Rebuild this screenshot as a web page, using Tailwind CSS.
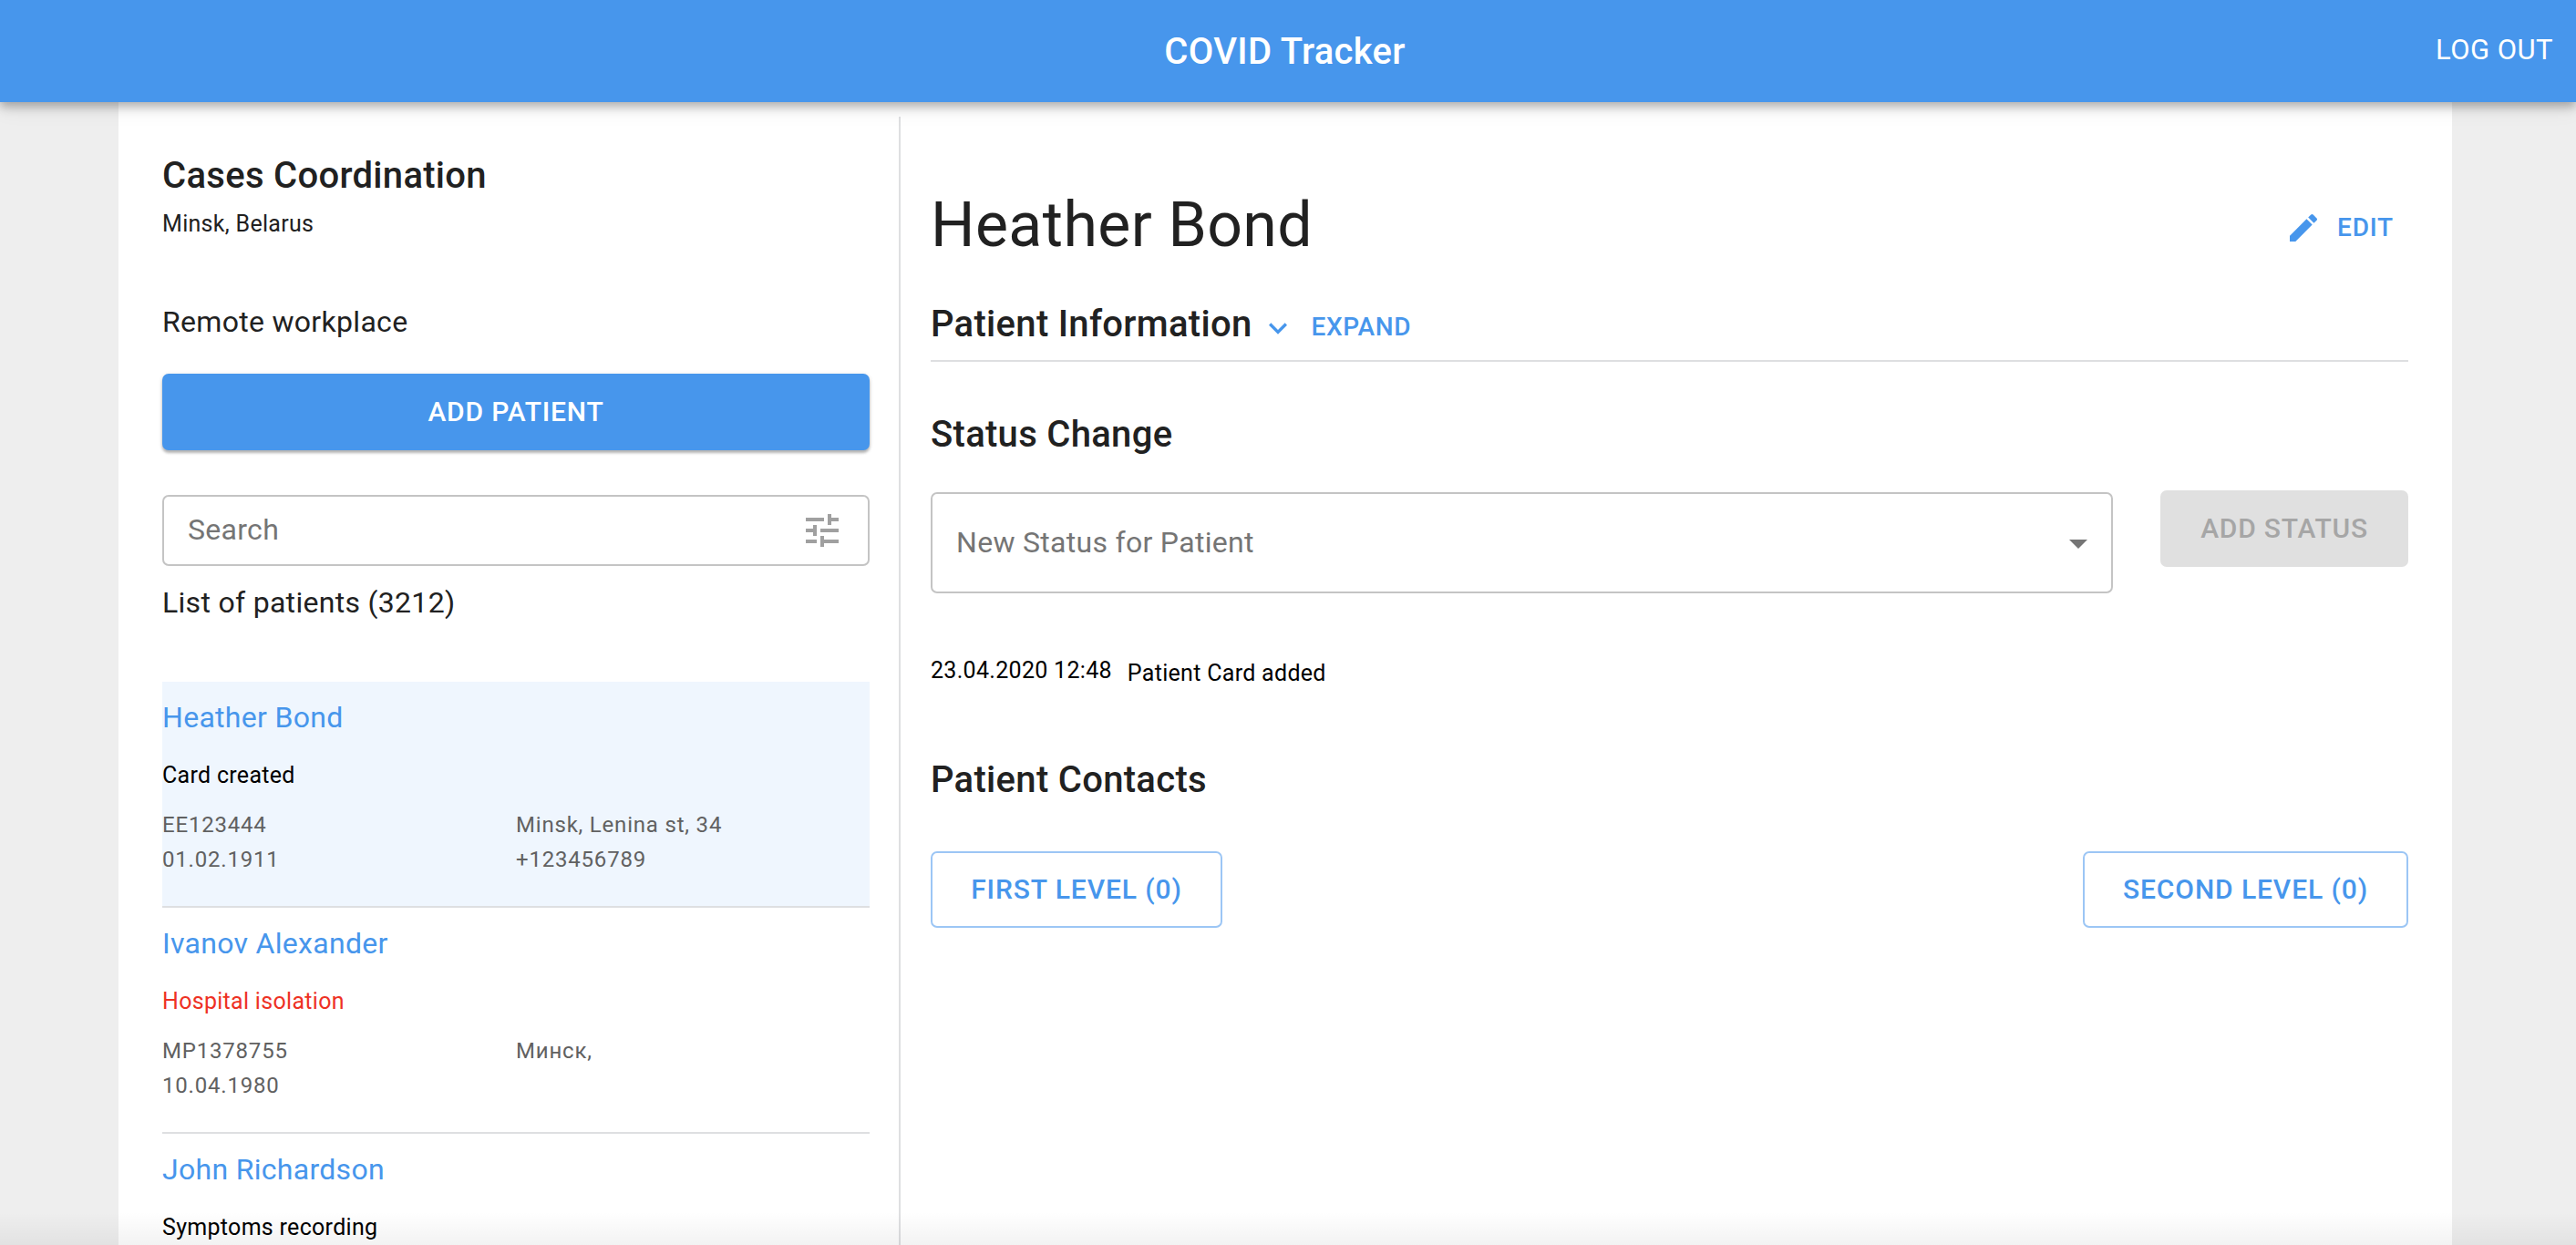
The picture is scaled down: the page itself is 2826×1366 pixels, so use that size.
<!DOCTYPE html>
<html lang="en">

<head>
    <meta charset="UTF-8">
    <meta name="viewport" content="width=device-width, initial-scale=1.0">
    <title>COVID Tracker</title>
    <script src="https://cdn.jsdelivr.net/npm/@tailwindcss/browser@4"></script>
</head>

<body class="relative h-screen overflow-hidden bg-[#eeeeee] font-['Roboto',sans-serif] text-[#212121]">
    <header class="relative z-10 flex h-[112px] items-center justify-center bg-[#4796ec] pr-[7px] pt-[2px] text-white shadow-[0_5px_10px_rgba(0,0,0,0.28),0_10px_20px_rgba(0,0,0,0.06)]">
        <h1 class="text-[40px] leading-[44px] font-medium tracking-[0.3px]">COVID Tracker</h1>
        <a class="absolute right-[25px] top-[37px] text-[31px] leading-[36px] tracking-[0.45px]">LOG OUT</a>
    </header>

    <main class="ml-[130px] flex h-[1254px] w-[2560px] bg-white">
        <!-- left column -->
        <aside class="w-[856px] shrink-0 pl-[48px] pr-[32px]">
            <h2 class="mt-[59px] text-[40px] leading-[44px] font-medium tracking-[0.3px]">Cases Coordination</h2>
            <p class="mt-[18px] text-[25px] leading-[26px] tracking-[0.3px]">Minsk, Belarus</p>
            <p class="mt-[76px] text-[32px] leading-[36px] tracking-[0.3px]">Remote workplace</p>
            <button class="mt-[39px] h-[84px] w-full rounded-[7px] bg-[#4796ec] pb-[2px] text-[30px] font-medium tracking-[0.8px] text-white shadow-[0_3px_3px_rgba(0,0,0,0.25),0_1px_5px_rgba(0,0,0,0.12)]">ADD PATIENT</button>
            <div class="mt-[49px] flex h-[78px] items-center justify-between rounded-[7px] border-2 border-[#c4c4c4] pl-[26px] pr-[26px]">
                <span class="pb-[2px] text-[32px] tracking-[0.3px] text-[#757575]">Search</span>
                <svg class="h-[48px] w-[48px] fill-[#a0a0a0]" viewBox="0 0 24 24"><path d="M3 17v2h6v-2H3zM3 5v2h10V5H3zm10 16v-2h8v-2h-8v-2h-2v6h2zM7 9v2H3v2h4v2h2V9H7zm14 4v-2H11v2h10zm-6-4h2V7h4V5h-4V3h-2v6z"/></svg>
            </div>
            <p class="mt-[22px] text-[32px] leading-[36px] tracking-[0.3px]">List of patients (3212)</p>

            <ul class="mt-[69px]">
                <li class="h-[248px] border-b-2 border-[#dedfe1] bg-[#eff6fe] pt-[21px]">
                    <p class="text-[32px] leading-[36px] tracking-[0.3px] text-[#4796ec]">Heather Bond</p>
                    <p class="mt-[33px] text-[25px] leading-[26px] tracking-[0.3px] text-black">Card created</p>
                    <div class="mt-[28px] grid grid-cols-2 gap-y-[12px] text-[24px] leading-[26px] tracking-[0.8px] text-[#616161]">
                        <span>EE123444</span><span>Minsk, Lenina st, 34</span>
                        <span>01.02.1911</span><span>+123456789</span>
                    </div>
                </li>
                <li class="h-[248px] border-b-2 border-[#dedfe1] pt-[21px]">
                    <p class="text-[32px] leading-[36px] tracking-[0.3px] text-[#4796ec]">Ivanov Alexander</p>
                    <p class="mt-[33px] text-[25px] leading-[26px] tracking-[0.3px] text-[#ee3124]">Hospital isolation</p>
                    <div class="mt-[28px] grid grid-cols-2 gap-y-[12px] text-[24px] leading-[26px] tracking-[0.8px] text-[#616161]">
                        <span>MP1378755</span><span>Минск,</span>
                        <span>10.04.1980</span><span></span>
                    </div>
                </li>
                <li class="pt-[21px]">
                    <p class="text-[32px] leading-[36px] tracking-[0.3px] text-[#4796ec]">John Richardson</p>
                    <p class="mt-[33px] text-[25px] leading-[26px] tracking-[0.3px] text-black">Symptoms recording</p>
                </li>
            </ul>
        </aside>

        <!-- right column -->
        <section class="mt-[16px] min-w-0 flex-1 border-l-2 border-[#dedfe1] pl-[33px] pr-[48px] pt-[83px]">
            <div class="flex h-[72px] items-center justify-between">
                <h2 class="text-[68px] leading-[72px] tracking-[0.4px]">Heather Bond</h2>
                <button class="mr-[16px] mt-[5px] flex items-center gap-[17px] text-[28px] font-medium tracking-[0.8px] text-[#4796ec]">
                    <svg class="h-[40px] w-[40px] fill-[#4796ec]" viewBox="0 0 24 24"><path d="M3 17.25V21h3.75L17.81 9.94l-3.75-3.75L3 17.25zM20.71 7.04c.39-.39.39-1.02 0-1.41l-2.34-2.34a.9959.9959 0 0 0-1.41 0l-1.83 1.83 3.75 3.75 1.83-1.83z"/></svg>
                    EDIT
                </button>
            </div>

            <div class="mt-[51px] flex h-[63px] items-start border-b-2 border-[#dedfe1]">
                <h3 class="text-[40px] leading-[44px] font-medium tracking-[0.3px]">Patient Information</h3>
                <svg class="ml-[9px] mt-[6px] h-[40px] w-[40px] fill-[#4796ec]" viewBox="0 0 24 24"><path d="M16.59 8.59L12 13.17 7.41 8.59 6 10l6 6 6-6z"/></svg>
                <span class="ml-[16px] mt-[10px] text-[28px] leading-[30px] font-medium tracking-[0.6px] text-[#4796ec]">EXPAND</span>
            </div>

            <h3 class="mt-[58px] text-[40px] leading-[44px] font-medium tracking-[0.3px]">Status Change</h3>
            <div class="mt-[39px] flex items-start justify-between">
                <div class="mt-[2px] flex h-[111px] w-[1297px] items-center justify-between rounded-[7px] border-2 border-[#c4c4c4] pl-[26px] pr-[12px]">
                    <span class="pb-[2px] text-[32px] tracking-[0.3px] text-[#757575]">New Status for Patient</span>
                    <svg class="h-[48px] w-[48px] fill-[#757575]" viewBox="0 0 24 24"><path d="M7 10l5 5 5-5z"/></svg>
                </div>
                <button class="h-[84px] w-[272px] rounded-[7px] bg-[#e0e0e0] pb-[2px] text-[30px] font-medium tracking-[0.8px] text-[#a6a6a6]">ADD STATUS</button>
            </div>

            <div class="mt-[72px] flex items-start gap-[17px] text-black">
                <span class="text-[25px] leading-[26px] tracking-[0.3px]">23.04.2020 12:48</span>
                <span class="mt-[3px] text-[25px] leading-[26px] tracking-[0.3px]">Patient Card added</span>
            </div>

            <h3 class="mt-[82px] text-[40px] leading-[44px] font-medium tracking-[0.3px]">Patient Contacts</h3>
            <div class="mt-[56px] flex justify-between">
                <button class="h-[84px] w-[320px] rounded-[7px] border-2 border-[#9cc6f5] pb-[2px] text-[30px] font-medium tracking-[0.9px] text-[#4796ec]">FIRST LEVEL (0)</button>
                <button class="h-[84px] w-[357px] rounded-[7px] border-2 border-[#9cc6f5] pb-[2px] text-[30px] font-medium tracking-[0.9px] text-[#4796ec]">SECOND LEVEL (0)</button>
            </div>
        </section>
    </main>

    <div class="pointer-events-none absolute inset-x-0 bottom-0 h-[36px] bg-linear-to-t from-black/5 to-transparent"></div>
</body>

</html>
